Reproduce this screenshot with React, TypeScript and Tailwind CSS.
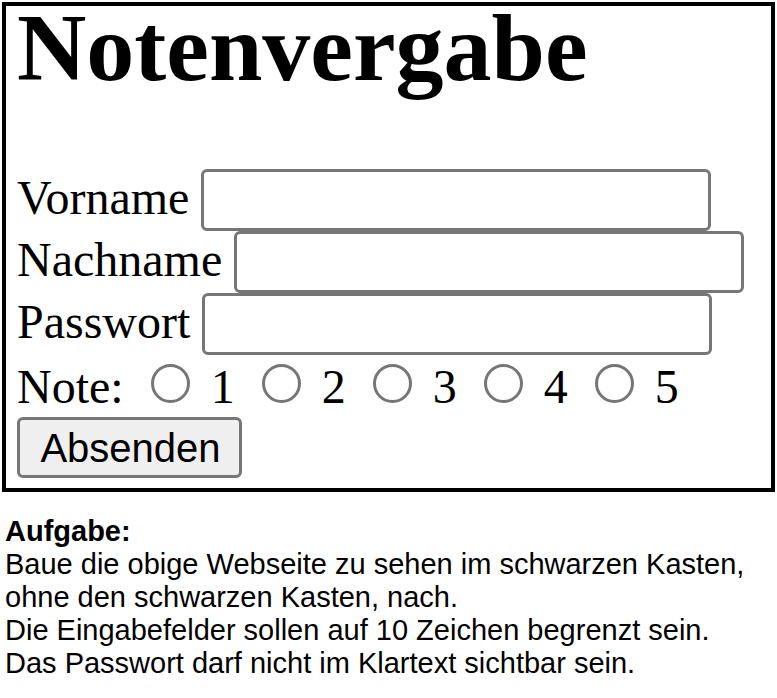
const fields = [
  { label: "Vorname", type: "text" },
  { label: "Nachname", type: "text" },
  { label: "Passwort", type: "password" },
];

const grades = [1, 2, 3, 4, 5];

export default function App() {
  return (
    <div className="min-h-screen bg-white text-black">
      <div className="m-[2px] border-4 border-black pl-[11px] pb-[10px] font-['Liberation_Serif','Times_New_Roman',serif]">
        <h1 className="pb-[24px] text-[96px] font-bold leading-[83px]">Notenvergabe</h1>

        <form className="mt-[56px] text-[48px] leading-[normal]" onSubmit={(e) => e.preventDefault()}>
          {fields.map((f) => (
            <div key={f.label} className="flex items-baseline gap-[12px]">
              <label>{f.label}</label>
              <input
                type={f.type}
                maxLength={10}
                className="h-[62px] w-[510px] rounded-[6px] border-[3px] border-[#767676] bg-white px-[6px] font-['Liberation_Sans',Arial,sans-serif] text-[40px] leading-[normal] outline-none"
              />
            </div>
          ))}

          <div>
            Note:
            {grades.map((g) => (
              <span key={g}>
                {" "}
                <span className="ml-[15px] mr-[9px] mt-[9px] inline-block h-[39px] w-[39px] rounded-full border-[3px] border-[#767676] bg-white align-baseline" />{" "}
                {g}
              </span>
            ))}
          </div>

          <button
            type="submit"
            className="mt-[3px] block h-[61px] w-[225px] rounded-[6px] border-[3px] border-[#767676] bg-[#efefef] pl-[2px] font-['Liberation_Sans',Arial,sans-serif] text-[40px] leading-[46px]"
          >
            Absenden
          </button>
        </form>
      </div>

      <div className="mt-[23px] pl-[5px] font-['Liberation_Sans',Arial,sans-serif] text-[29px] leading-[33px]">
        <b>Aufgabe:</b>
        <br />
        Baue die obige Webseite zu sehen im schwarzen Kasten,
        <br />
        ohne den schwarzen Kasten, nach.
        <br />
        Die Eingabefelder sollen auf 10 Zeichen begrenzt sein.
        <br />
        Das Passwort darf nicht im Klartext sichtbar sein.
      </div>
    </div>
  );
}
